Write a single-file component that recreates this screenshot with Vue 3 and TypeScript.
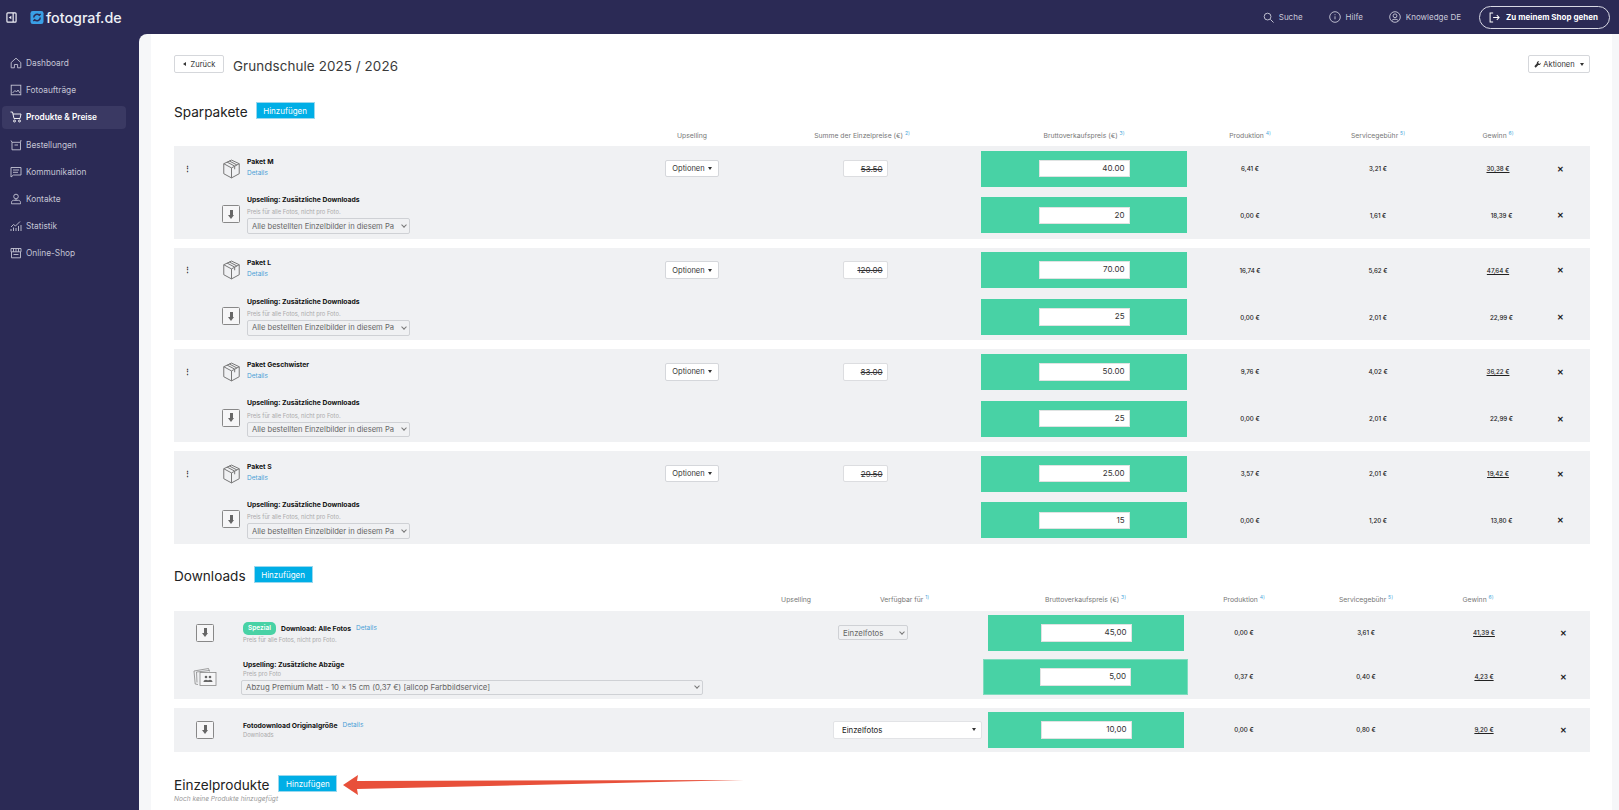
<script setup lang="ts">
interface Pkg { name: string; sum: string; price: string; prod: string; fee: string; win: string; upPrice: string; upFee: string; upWin: string }
const nav = [
  { label: 'Dashboard', icon: 'home' },
  { label: 'Fotoaufträge', icon: 'image' },
  { label: 'Produkte & Preise', icon: 'cart', active: true },
  { label: 'Bestellungen', icon: 'basket' },
  { label: 'Kommunikation', icon: 'chat' },
  { label: 'Kontakte', icon: 'person' },
  { label: 'Statistik', icon: 'chart' },
  { label: 'Online-Shop', icon: 'store' },
]
const pkgs: Pkg[] = [
  { name: 'Paket M', sum: '53.50', price: '40.00', prod: '6,41 €', fee: '3,21 €', win: '30,38 €', upPrice: '20', upFee: '1,61 €', upWin: '18,39 €' },
  { name: 'Paket L', sum: '120.00', price: '70.00', prod: '16,74 €', fee: '5,62 €', win: '47,64 €', upPrice: '25', upFee: '2,01 €', upWin: '22,99 €' },
  { name: 'Paket Geschwister', sum: '83.00', price: '50.00', prod: '9,76 €', fee: '4,02 €', win: '36,22 €', upPrice: '25', upFee: '2,01 €', upWin: '22,99 €' },
  { name: 'Paket S', sum: '29.50', price: '25.00', prod: '3,57 €', fee: '2,01 €', win: '19,42 €', upPrice: '15', upFee: '1,20 €', upWin: '13,80 €' },
]
</script>

<template>
  <div class="app">
    <header class="top">
      <svg class="toggle" viewBox="0 0 12 12" width="11" height="11" fill="none" stroke="#f0f0f6" stroke-width="1.300"><rect x="1" y="1" width="10" height="10" rx="1"/><path d="M7.800 1v10"/><path d="M5.800 4v4L3 6z" fill="#f0f0f6" stroke="none"/></svg>
      <svg class="logo" viewBox="0 0 14 14" width="14" height="13"><rect width="14" height="14" rx="2.500" fill="#3a9fe6"/><path d="M3.500 7a3.500 3.500 0 0 1 6-2.500l1.500-1.300M10.500 7a3.500 3.500 0 0 1-6 2.500L3 10.800" fill="none" stroke="#2b2a55" stroke-width="1.600"/></svg>
      <span class="brand">fotograf.de</span>
      <span class="spacer"></span>
      <svg class="t-ic" viewBox="0 0 12 12" width="11" height="11" fill="none" stroke="#c9c9d8" stroke-width="1"><circle cx="5" cy="5" r="3.700"/><path d="M8 8l3.500 3.500"/></svg>
      <span class="t-link t-suche">Suche</span>
      <svg class="t-ic" viewBox="0 0 12 12" width="12" height="12" fill="none" stroke="#c9c9d8" stroke-width=".9"><circle cx="6" cy="6" r="5.300"/><path d="M6 5.300v3M6 3.300v.9"/></svg>
      <span class="t-link t-hilfe">Hilfe</span>
      <svg class="t-ic" viewBox="0 0 12 12" width="12" height="12" fill="none" stroke="#c9c9d8" stroke-width=".9"><circle cx="6" cy="6" r="5.300"/><circle cx="6" cy="4.800" r="1.900"/><path d="M2.800 9.500c1-1.700 5.400-1.700 6.400 0"/></svg>
      <span class="t-link t-know">Knowledge DE</span>
      <button class="shop">
        <svg viewBox="0 0 12 12" width="11" height="11" fill="none" stroke="#fff" stroke-width="1.100"><path d="M4.500 1H1.200v10h3.300"/><path d="M4.500 6h6.500M8.500 3.500L11 6 8.500 8.500"/></svg>
        <span>Zu meinem Shop gehen</span>
      </button>
    </header>

    <div class="body">
      <aside class="side">
        <a v-for="n in nav" :key="n.label" class="nav" :class="{ on: n.active }">
          <svg viewBox="0 0 12 12" width="12" height="12" fill="none" :stroke="n.active ? '#fff' : '#c4c4d4'" stroke-width=".9">
            <path v-if="n.icon === 'home'" d="M1.200 5.500L6 1.200l4.800 4.300v5.300H7.600V7.500H4.400v3.300H1.200z"/>
            <template v-else-if="n.icon === 'image'"><rect x="1.200" y="1.200" width="9.600" height="9.600"/><path d="M2.500 9l2.500-2.500 1.500 1.500 1.500-2 2 3"/></template>
            <template v-else-if="n.icon === 'cart'"><path d="M.5 1h2l1.500 6.500h6l1-4.500H3"/><circle cx="4.500" cy="10" r="1"/><circle cx="9.500" cy="10" r="1"/></template>
            <template v-else-if="n.icon === 'basket'"><path d="M1 1.500l1 1.800h8.500L11 1M2 3.300v7.500h8.500V3.300M4.500 6h3.500"/></template>
            <template v-else-if="n.icon === 'chat'"><path d="M1 1.500h10v7.500H3.500L1 11z"/><path d="M3 4h6M3 6.300h5"/></template>
            <template v-else-if="n.icon === 'person'"><circle cx="6" cy="3.500" r="2.300"/><path d="M6 5.800v1.500M1.500 10.800V9.300c0-1 1-2 2-2h5c1 0 2 1 2 2v1.500z"/></template>
            <template v-else-if="n.icon === 'chart'"><path d="M1 7l2.500-2.500 2 1.500L10 1.500M1 11V9M3.500 11V7.500M6 11V8M8.500 11V6M11 11V5"/></template>
            <template v-else><path d="M1.500 5v5.800h9V5M1 1.500h10v3.300H1zM3.500 1.500v3.300M6 1.500v3.300M8.500 1.500v3.300M3.500 7.500h5"/></template>
          </svg>
          <span>{{ n.label }}</span>
        </a>
      </aside>

      <main class="main">
        <div class="sheet">
          <div class="head">
            <button class="white-btn back"><i class="tri-left"></i>Zurück</button>
            <h1>Grundschule 2025 / 2026</h1>
            <span class="spacer"></span>
            <button class="white-btn act">
              <svg viewBox="0 0 10 10" width="7" height="7" fill="#333"><path d="M9.500 2.500L7.500 4.300 5.800 2.500 7.500.6C5.800 0 3.800 1 4 3.400L.5 7.500 2.400 9.500 6.200 5.800C8.600 6.200 10 4.300 9.500 2.500z"/></svg>
              Aktionen<i class="caret"></i>
            </button>
          </div>

          <div class="sec-title first">
            <h2>Sparpakete</h2>
            <button class="blue">Hinzufügen</button>
          </div>

          <div class="pk-grid cols">
            <span></span><span></span><span></span>
            <span class="col">Upselling</span>
            <span class="col sum-h">Summe der Einzelpreise (€) <sup>2)</sup></span>
            <span class="col">Bruttoverkaufspreis (€) <sup>3)</sup></span>
            <span class="col">Produktion <sup>4)</sup></span>
            <span class="col">Servicegebühr <sup>5)</sup></span>
            <span class="col">Gewinn <sup>6)</sup></span>
          </div>

          <section v-for="p in pkgs" :key="p.name" class="group">
            <div class="pk-grid row">
              <span class="handle">⋮</span>
              <svg class="box" viewBox="0 0 20 22" width="19" height="20" fill="none" stroke="#777" stroke-width="1.100"><path d="M10 1.200l8.500 4v11L10 20.800 1.500 16.200v-11z"/><path d="M1.500 5.200L10 9.800l8.500-4.600M10 9.800v11M5 3.300l8.500 4.500v3.500M7.500 2.100l8.500 4.500"/></svg>
              <div class="pk-name">
                <div class="name">{{ p.name }}</div>
                <a class="link block">Details</a>
              </div>
              <button class="white-btn opt">Optionen<i class="caret"></i></button>
              <div class="sum-box"><s>{{ p.sum }}</s></div>
              <div class="green"><div class="price">{{ p.price }}</div></div>
              <span class="val">{{ p.prod }}</span>
              <span class="val">{{ p.fee }}</span>
              <span class="val"><u>{{ p.win }}</u></span>
              <span class="x">✕</span>
            </div>
            <div class="pk-grid row">
              <span></span>
              <span class="dl-ic up-ic"><i></i></span>
              <div class="up-text">
                <div class="name">Upselling: Zusätzliche Downloads</div>
                <div class="hint">Preis für alle Fotos, nicht pro Foto.</div>
                <div class="select pk-sel"><span>Alle bestellten Einzelbilder in diesem Pa</span><i class="chev"></i></div>
              </div>
              <span></span><span></span>
              <div class="green"><div class="price">{{ p.upPrice }}</div></div>
              <span class="val">0,00 €</span>
              <span class="val">{{ p.upFee }}</span>
              <span class="val up-win">{{ p.upWin }}</span>
              <span class="x">✕</span>
            </div>
          </section>

          <div class="sec-title dl-title">
            <h2>Downloads</h2>
            <button class="blue">Hinzufügen</button>
          </div>

          <div class="dl-grid cols cols-dl">
            <span></span>
            <span class="col up-h">Upselling</span>
            <span class="col ver-h">Verfügbar für <sup>1)</sup></span>
            <span class="col">Bruttoverkaufspreis (€) <sup>3)</sup></span>
            <span class="col">Produktion <sup>4)</sup></span>
            <span class="col">Servicegebühr <sup>5)</sup></span>
            <span class="col win-h">Gewinn <sup>6)</sup></span>
          </div>

          <section class="group">
            <div class="dl-grid row-d">
              <span class="dl-ic dl-c"><i></i></span>
              <div class="d-text">
                <div class="line"><span class="badge">Spezial</span><span class="name">Download: Alle Fotos</span><a class="link">Details</a></div>
                <div class="hint">Preis für alle Fotos, nicht pro Foto.</div>
              </div>
              <div class="select small-sel"><span>Einzelfotos</span><i class="chev"></i></div>
              <div class="green narrow"><div class="price wide">45,00</div></div>
              <span class="val">0,00 €</span>
              <span class="val">3,61 €</span>
              <span class="val"><u>41,39 €</u></span>
              <span class="x">✕</span>
            </div>
            <div class="dl-grid row-d">
              <svg class="photos" viewBox="0 0 24 19" width="24" height="19" fill="none" stroke="#888" stroke-width=".8"><path d="M5 17.500L2.200 17 1 4l14.500-2.500 1 3"/><path d="M4 15.500L3.500 5l13-1.500"/><rect x="7" y="5.500" width="16" height="13" fill="#f6f6f7"/><circle cx="13" cy="10" r="1.300" fill="#666" stroke="none"/><circle cx="17" cy="10" r="1.300" fill="#666" stroke="none"/><path d="M10.500 15c0-3 5-3 5 0zM14.500 15c0-3 5-3 5 0z" fill="#666" stroke="none"/></svg>
              <div class="d-text up-d">
                <div class="name">Upselling: Zusätzliche Abzüge</div>
                <div class="hint">Preis pro Foto</div>
                <div class="select long-sel"><span>Abzug Premium Matt - 10 × 15 cm (0,37 €) [allcop Farbbildservice]</span><i class="chev"></i></div>
              </div>
              <span></span>
              <div class="green edge"><div class="price wide">5,00</div></div>
              <span class="val">0,37 €</span>
              <span class="val">0,40 €</span>
              <span class="val"><u>4,23 €</u></span>
              <span class="x">✕</span>
            </div>
          </section>

          <section class="group">
            <div class="dl-grid row-e">
              <span class="dl-ic dl-c"><i></i></span>
              <div class="d-text">
                <div class="line"><span class="name">Fotodownload Originalgröße</span><a class="link">Details</a></div>
                <div class="hint">Downloads</div>
              </div>
              <div class="white-sel"><span>Einzelfotos</span><i class="caret"></i></div>
              <div class="green narrow"><div class="price wide">10,00</div></div>
              <span class="val">0,00 €</span>
              <span class="val">0,80 €</span>
              <span class="val"><u>9,20 €</u></span>
              <span class="x">✕</span>
            </div>
          </section>

          <div class="sec-title ein-title">
            <h2>Einzelprodukte</h2>
            <button class="blue">Hinzufügen</button>
          </div>
          <p class="none">Noch keine Produkte hinzugefügt</p>
        </div>
      </main>
    </div>

    <svg class="arrow" width="420" height="30" viewBox="0 0 420 30"><polygon points="1,13 16,3 15,9 402,8 15,17 16,23" fill="#e8503a"/></svg>
  </div>
</template>

<style>
html, body { margin: 0; background: #2b2a55; overflow: hidden; }
</style>

<style scoped>
.app { position: relative; width: 1619px; height: 810px; overflow: hidden; background: #2b2a55; font-family: Inter, "Noto Sans", sans-serif; color: #222; }
button { font-family: inherit; cursor: default; }
i { font-style: normal; display: inline-block; }
.spacer { flex: 1; }

.top { height: 34px; display: flex; align-items: center; padding: 0 9px 0 6px; box-sizing: border-box; color: #fff; }
.toggle { margin-right: 13px; }
.logo { margin-right: 2px; }
.brand { font-size: 14.300px; font-weight: 500; color: #eef0f6; }
.t-ic { margin-right: 5px; }
.t-link { font-size: 8px; color: #c9c9d8; }
.t-suche { margin-right: 26px; }
.t-hilfe { margin-right: 26px; }
.t-know { margin-right: 18px; }
.shop { height: 23px; width: 131px; border: 1px solid #d8d8e4; border-radius: 12px; background: transparent; color: #fff; font-size: 8px; font-weight: 700; display: flex; align-items: center; gap: 6px; padding: 0 0 0 9px; box-sizing: border-box; white-space: nowrap; }

.body { display: flex; height: 776px; }
.side { width: 139px; flex: none; padding: 17.500px 0 0 2px; box-sizing: border-box; display: flex; flex-direction: column; gap: 4.200px; }
.nav { width: 124px; height: 23px; flex: none; display: flex; align-items: center; gap: 4px; padding-left: 8px; box-sizing: border-box; font-size: 8.300px; color: #c4c4d4; border-radius: 4px; }
.nav.on { background: #3a3963; color: #fff; font-weight: 600; }

.main { flex: 1; background: #f6f7f9; border-top-left-radius: 8px; padding: 0 7px 0 12px; overflow: hidden; }
.sheet { background: #fff; height: 776px; padding: 21px 22px 0 23px; box-sizing: border-box; }

.head { display: flex; align-items: center; height: 18px; }
h1 { margin: 0 0 0 9px; padding-top: 3px; font-size: 13.400px; font-weight: 400; color: #3a3a3a; letter-spacing: .1px; }
h2 { margin: 0; padding-top: 2px; font-size: 13.600px; font-weight: 400; color: #222; }
.white-btn { background: #fff; border: 1px solid #d5d7db; border-radius: 2px; font-size: 7.500px; color: #333; height: 18px; display: inline-flex; align-items: center; justify-content: center; padding: 0; box-sizing: border-box; white-space: nowrap; }
.back { width: 50px; gap: 5px; }
.act { width: 62px; gap: 2px; }
.tri-left { width: 0; height: 0; border: 2.500px solid transparent; border-right: 3px solid #333; border-left: 0; }
.caret { width: 0; height: 0; border: 2.500px solid transparent; border-top: 3px solid #333; border-bottom: 0; margin-left: 3px; }

.sec-title { display: flex; align-items: center; gap: 8px; }
.first { margin-top: 29px; height: 17px; }
.dl-title { margin-top: 23px; height: 16px; gap: 8px; }
.ein-title { margin-top: 24px; height: 16px; gap: 9px; }
.blue { height: 17px; width: 59px; background: #00aee6; border: 1px solid #9ad8ee; color: #fff; font-size: 8px; padding: 0; box-sizing: border-box; white-space: nowrap; flex: none; }

.pk-grid { display: grid; grid-template-columns: 48px 25px 388px 114px 232px 206px 126px 130px 110px 14px; padding-right: 23px; align-items: center; }
.dl-grid { display: grid; grid-template-columns: 62px 597px 150px 205px 112px 132px 104px 54px; align-items: center; }
.cols { height: 27px; padding-bottom: 6px; box-sizing: border-box; align-items: end; }
.cols-dl { height: 28px; padding-bottom: 7px; }
.col { font-size: 6.800px; color: #777; text-align: center; white-space: nowrap; line-height: 9px; }
.col sup { font-size: 5px; color: #4aa8dc; line-height: 0; }
.sum-h { margin-right: 6px; }
.up-h { justify-self: end; margin-right: 22px; }
.ver-h { justify-self: start; margin-left: 47px; }
.win-h { margin-right: 12px; }

.group { background: #f0f1f3; margin-bottom: 9px; }
.row { height: 46.350px; box-sizing: border-box; padding-top: 4px; grid-template-rows: 37px; }
.row + .row { padding-top: 4.500px; }
.handle { font-size: 6.500px; font-weight: 700; color: #222; padding-left: 10px; }
.box { display: block; }
.pk-name { margin-top: -3px; }
.name { font-size: 6.800px; font-weight: 700; color: #111; line-height: 9px; white-space: nowrap; }
.link { font-size: 6.500px; color: #4a9fd6; }
.block { display: block; margin-top: 3px; line-height: 9px; }
.hint { font-size: 5.800px; color: #aaa; line-height: 9px; white-space: nowrap; }
.opt { height: 17.500px; width: 54px; justify-self: center; }
.sum-box { justify-self: center; width: 45px; height: 17.500px; background: #fff; border: 1px solid #dcdde0; border-radius: 2px; font-size: 8px; color: #333; display: flex; align-items: center; justify-content: flex-end; padding-right: 4px; box-sizing: border-box; }
.green { background: #48d2a5; height: 36px; display: flex; align-items: center; justify-content: center; }
.price { width: 91px; height: 17.500px; background: #fff; border: 1px solid #dfe3e2; box-sizing: border-box; font-size: 8px; color: #333; text-align: right; padding-right: 4px; line-height: 15.500px; }
.wide { width: 91px; }
.val { font-size: 6.200px; font-weight: 500; color: #222; text-align: center; white-space: nowrap; }
.up-win { padding-left: 7px; }
.x { font-size: 8px; font-weight: 700; color: #222; text-align: center; line-height: 10px; }
.dl-ic { width: 18px; height: 18px; border: 1.300px solid #888; border-radius: 1.500px; box-sizing: border-box; background: #f6f6f7; display: flex; align-items: center; justify-content: center; position: relative; }
.up-ic { margin-top: -2px; }
.dl-ic i { width: 3px; height: 6px; background: #666; position: relative; top: -1.500px; }
.dl-ic i::after { content: ""; position: absolute; left: -2px; top: 5px; border: 3.500px solid transparent; border-top: 4px solid #666; border-bottom: 0; }
.up-text { align-self: start; margin-top: -4px; }
.up-text .name { margin-top: 2px; }
.up-text .hint { margin-top: 3.500px; }
.select { display: flex; align-items: center; background: #f0f1f3; border: 1px solid #cfd1d5; border-radius: 2px; box-sizing: border-box; color: #666; white-space: nowrap; }
.select span { flex: 1; }
.chev { width: 3px; height: 3px; border-right: 1px solid #777; border-bottom: 1px solid #777; transform: rotate(45deg); margin: -2px 3px 0 0; flex: none; }
.pk-sel { width: 163px; height: 15.500px; margin-top: 2px; padding-left: 4px; font-size: 7.600px; }

.row-d { height: 44px; }
.row-e { height: 44px; }
.dl-c { justify-self: center; }
.photos { justify-self: center; margin-left: -1px; }
.d-text { padding-left: 7px; }
.up-d { padding-left: 5px; align-self: start; }
.up-d .name { margin-top: 5px; padding-left: 2px; }
.up-d .hint { padding-left: 2px; }
.line { display: flex; align-items: center; gap: 5px; }
.badge { background: #48d2a5; color: #fff; font-size: 6.500px; font-weight: 600; width: 33px; height: 13px; line-height: 13px; border-radius: 5px; text-align: center; }
.small-sel { width: 70px; height: 15px; margin-left: 5px; padding-left: 4px; font-size: 7.800px; }
.long-sel { width: 462px; height: 15px; margin-top: 2px; padding-left: 4px; font-size: 7.800px; }
.white-sel { width: 149px; height: 18px; background: #fff; border: 1px solid #e2e3e6; border-radius: 2px; box-sizing: border-box; font-size: 7.800px; color: #222; display: flex; align-items: center; justify-content: space-between; padding: 0 5px 0 8px; }
.narrow { margin: 0 4px 0 5px; }
.edge { border: 1px solid #7fdcbe; box-sizing: border-box; }
.none { margin: 3px 0 0; font-size: 6.600px; font-style: italic; color: #999; }

.arrow { position: absolute; left: 342px; top: 772px; }
</style>
